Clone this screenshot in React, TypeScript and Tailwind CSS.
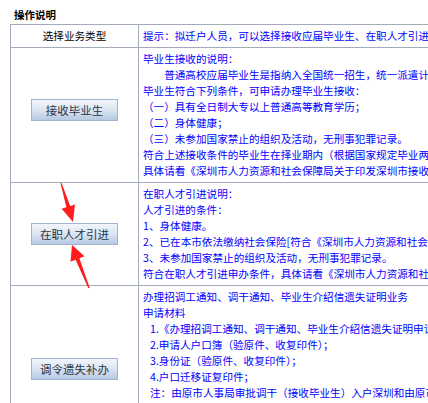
import React from "react";

const font = { fontFamily: '"Noto Sans CJK SC", "Noto Sans", sans-serif' };

function Btn({ label, extra = "" }: { label: string; extra?: string }) {
  return (
    <div
      className={`w-[87px] h-[22px] flex items-center justify-center border border-[#9fb4d2] bg-gradient-to-b from-[#f3f6fb] via-[#dbe5f2] to-[#b6c9e2] text-[11.5px] text-[#2a3646] ${extra}`}
    >
      {label}
    </div>
  );
}

export default function App() {
  const row1 = [
    "毕业生接收的说明：",
    "　　普通高校应届毕业生是指纳入全国统一招生，统一派遣计划的普通高校毕业生。",
    "毕业生符合下列条件，可申请办理毕业生接收：",
    "（一）具有全日制大专以上普通高等教育学历；",
    "（二）身体健康；",
    "（三）未参加国家禁止的组织及活动，无刑事犯罪记录。",
    "符合上述接收条件的毕业生在择业期内（根据国家规定毕业两年内）可申请。",
    "具体请看《深圳市人力资源和社会保障局关于印发深圳市接收普通高校毕业生办法的通知》",
  ];
  const row2 = [
    "在职人才引进说明：",
    "人才引进的条件：",
    "1、身体健康。",
    "2、已在本市依法缴纳社会保险[符合《深圳市人力资源和社会保障局》有关规定]；",
    "3、未参加国家禁止的组织及活动，无刑事犯罪记录。",
    "符合在职人才引进申办条件，具体请看《深圳市人力资源和社会保障局关于人才引进的通知》",
  ];
  const row3: [string, boolean][] = [
    ["办理招调工通知、调干通知、毕业生介绍信遗失证明业务", false],
    ["申请材料", false],
    ["1.《办理招调工通知、调干通知、毕业生介绍信遗失证明申请表》；", true],
    ["2.申请人户口簿（验原件、收复印件）；", true],
    ["3.身份证（验原件、收复印件）；", true],
    ["4.户口迁移证复印件；", true],
    ["注：由原市人事局审批调干（接收毕业生）入户深圳和由原市劳动局审批招调工入户深圳的，", true],
    ["分别向市人力资源和社会保障局申请办理遗失补办手续。", true],
    ["5.其他需要提交的相关材料。", true],
    ["", true],
  ];

  return (
    <div className="relative w-[428px] h-[403px] overflow-hidden bg-white" style={font}>
      <div className="pl-[14px] pt-[7px] h-[24px] leading-[16px] text-[10.5px] font-bold text-black">
        操作说明
      </div>
      <div className="ml-[10px] w-[760px] border-l border-t border-[#a3aab9] grid grid-cols-[128px_632px] text-[10.6px] leading-[16px]">
        {/* header */}
        <div className="h-[23px] border-r border-b border-[#a3aab9] flex items-center justify-center text-black">
          选择业务类型
        </div>
        <div className="h-[23px] border-b border-[#a3aab9] flex items-center pl-[4px] text-[#0000ff] whitespace-nowrap">
          提示：拟迁户人员，可以选择接收应届毕业生、在职人才引进申请调入深圳。
        </div>

        {/* row 1 */}
        <div className="border-r border-b border-[#a3aab9] flex items-center justify-center">
          <Btn label="接收毕业生" extra="mb-[10px]" />
        </div>
        <div className="border-b border-[#a3aab9] py-[3px] pl-[4px] text-[#0000ff] whitespace-nowrap">
          {row1.map((t, i) => (
            <div key={i}>{t}</div>
          ))}
        </div>

        {/* row 2 */}
        <div className="border-r border-b border-[#a3aab9] flex items-center justify-center">
          <Btn label="在职人才引进" />
        </div>
        <div className="border-b border-[#a3aab9] py-[3px] pl-[4px] text-[#0000ff] whitespace-nowrap">
          {row2.map((t, i) => (
            <div key={i}>{t}</div>
          ))}
        </div>

        {/* row 3 */}
        <div className="border-r border-b border-[#a3aab9] flex items-center justify-center">
          <Btn label="调令遗失补办" />
        </div>
        <div className="border-b border-[#a3aab9] py-[3px] pl-[4px] text-[#0000ff] whitespace-nowrap">
          {row3.map(([t, ind], i) => (
            <div key={i} className={`h-[16px] ${ind ? "pl-[7px]" : ""}`}>
              {t}
            </div>
          ))}
        </div>
      </div>

      <svg
        className="absolute left-0 top-0 pointer-events-none"
        width="428"
        height="403"
        viewBox="0 0 428 403"
      >
        <polygon
          fill="#ff1c1c"
          points="73,222 75,204.6 70.2,206.1 61.5,182.85 60.5,183.15 66.4,207.3 61.6,208.8"
        />
        <polygon
          fill="#ff1c1c"
          points="72,245 84.5,256.2 79.4,258.3 89.65,287.7 88.35,288.3 75.6,259.7 70.5,261.8"
        />
      </svg>
    </div>
  );
}
